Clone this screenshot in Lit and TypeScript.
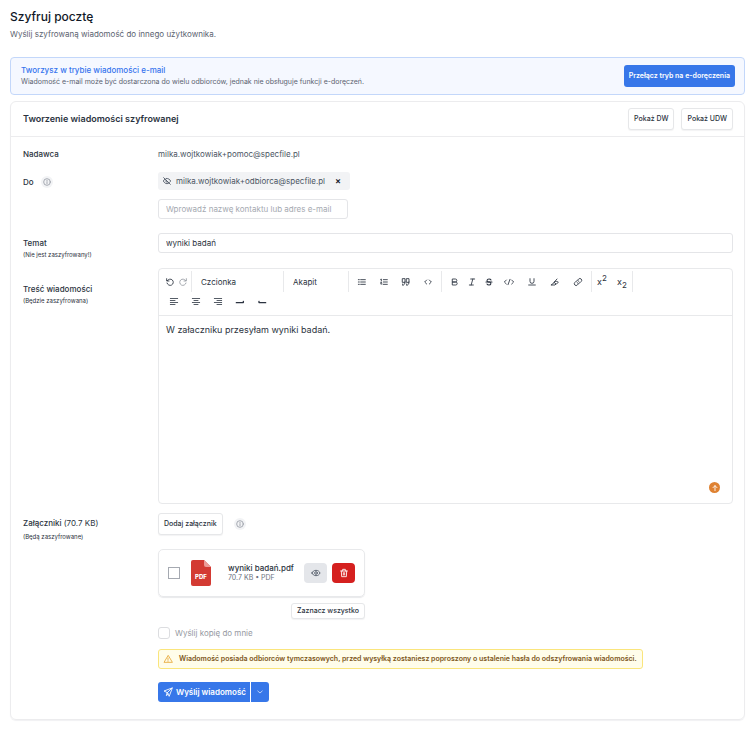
import { LitElement, html, css, svg, type TemplateResult } from "lit";
import { customElement, property } from "lit/decorators.js";

const glyphs: Record<string, TemplateResult> = {
  undo: svg`<path d="M4 8A9.500 9.500 0 1 1 3 15"/><path d="M2 2v7h7"/>`,
  redo: svg`<path d="M20 8A9.500 9.500 0 1 0 21 15"/><path d="M22 2v7h-7"/>`,
  bullets: svg`<path d="M8 5h14M8 12h14M8 19h14"/><path d="M1 5h3M1 12h3M1 19h3"/>`,
  numbers: svg`<path d="M10 5h12M10 12h12M10 19h12"/><path d="M2 4l2-1v6M2 13h3l-3 5h4"/>`,
  quote: svg`<path d="M2 2h7v11H2zM9 12c0 6-2 9-7 10V18M14 2h7v11h-7zM21 12c0 6-2 9-7 10V18"/>`,
  code: svg`<path d="M8 6l-6 6 6 6M16 6l6 6-6 6"/>`,
  bold: svg`<path d="M5 3h8a4.500 4.500 0 0 1 0 9H5zM5 12h9a4.500 4.500 0 0 1 0 9H5z"/>`,
  italic: svg`<path d="M8 3h12M4 21h12M14.500 3l-5 18"/>`,
  strike: svg`<path stroke-width="3.2" d="M18 6c-1-2-3-3-6-3-7 0-8 7-2 9h4c6 2 4 9-2 9-3 0-5-1-6-3"/><path stroke-width="3.2" d="M3 12h18"/>`,
  codeTag: svg`<path d="M4 6l-6 6 6 6M20 6l6 6-6 6M15 4L9 20"/>`,
  underline: svg`<path d="M6 2v8a6 6 0 0 0 12 0V2M2 21h20"/>`,
  marker: svg`<path d="M1 21h11l3-3-6-5-3 4zM9 13l9-10M15 18c3-1 6-3 7-6-3-2-8-3-12 0"/>`,
  link: svg`<path d="M9 14a5.500 5.500 0 0 0 8.500.5l4-4a5 5 0 0 0-7.500-7.500L12 5"/><path d="M15 10a5.500 5.500 0 0 0-8.500-.5l-4 4a5 5 0 0 0 7.500 7.500L12 19"/>`,
  left: svg`<path stroke-width="2.4" d="M1 1.500h22M1 7.500h14M1 13.500h22M1 19.500h14"/>`,
  center: svg`<path stroke-width="2.4" d="M1 1.500h22M6 7.500h12M1 13.500h22M6 19.500h12"/>`,
  right: svg`<path stroke-width="2.4" d="M1 1.500h22M9 7.500h14M1 13.500h22M9 19.500h14"/>`,
  outdent: svg`<path stroke-width="4" d="M1 14h19q3 0 2-4"/>`,
  indent: svg`<path stroke-width="4" d="M23 14H5q-3 0-2-4"/>`,
  info: svg`<circle cx="12" cy="12" r="10"/><path d="M12 11v6M12 7v1"/>`,
  hidden: svg`<path d="M2 2l20 20M6 6C4 7.500 2 10 1 12c2 4 6 8 11 8 2 0 4-.6 6-2M10 4.200C16 3.500 21 8 23 12c-.7 1.400-1.700 2.800-3 4M9.500 9.500a3.500 3.500 0 0 0 5 5"/>`,
  eye: svg`<path d="M0 12c2-5 6-8 12-8s10 3 12 8c-2 5-6 8-12 8s-10-3-12-8z"/><circle cx="12" cy="12" r="4"/>`,
  trash: svg`<path d="M2 6h20M8 6V1h8v5M4 6l1 17h14l1-17M10 11v7M14 11v7"/>`,
  warning: svg`<path d="M12 2L0 22h24zM12 9v6M12 18v1"/>`,
  send: svg`<path d="M24 0L0 9l10 5 5 10zM24 0L10 14M9 15l-2 8 6-5"/>`,
  chevron: svg`<path d="M3 8l9 8 9-8"/>`,
  up: svg`<path d="M12 20V5M6 11l6-6 6 6"/>`,
};

@customElement("ui-icon")
export class UiIcon extends LitElement {
  @property() name = "";

  static styles = css`
    :host { display: inline-flex; width: 8px; height: 8px; flex: none; }
    svg {
      width: 100%; height: 100%; fill: none; stroke: currentColor;
      stroke-width: 2.6; stroke-linecap: round; stroke-linejoin: round; overflow: visible;
    }
  `;

  render() {
    return html`<svg viewBox="0 0 24 24" aria-hidden="true">${glyphs[this.name]}</svg>`;
  }
}

@customElement("app-root")
export class AppRoot extends LitElement {
  static styles = css`
    :host {
      display: block;
      padding: 9px 11px 13px 10px;
      font: 400 8px/12px Inter, sans-serif;
      color: #2b3340;
      background: #fff;
    }
    * { box-sizing: border-box; }
    h1, h2, p { margin: 0; font-weight: 500; }
    button, input, select, textarea {
      font: inherit; color: inherit; margin: 0; outline: none;
    }
    button { display: inline-flex; align-items: center; justify-content: center; padding: 0; border: 0; background: none; }
    h1 { font-size: 12px; line-height: 16px; color: #111827; }
    .lead { margin-top: 3px; font-weight: 400; color: #5b6370; }

    .banner {
      display: flex; align-items: center; justify-content: space-between;
      margin-top: 17px; height: 38px; padding: 0 9px 0 10px;
      border: 1px solid #c3d7fa; border-radius: 4px; background: #f5f8ff;
    }
    .banner h2 { font-size: 8px; line-height: 11px; color: #3574ee; }
    .banner p { font-size: 7px; line-height: 11px; font-weight: 400; color: #5b6370; }
    .primary { background: #3777e9; color: #fff; font-weight: 600; }
    .switch { height: 22px; padding: 0 5px; font-size: 7px; border-radius: 3px; }

    .card { margin-top: 6px; border: 1px solid #ececee; border-radius: 6px; box-shadow: 0 1px 1px #f1f1f3; }
    .head {
      display: flex; align-items: center; gap: 7px; height: 35px;
      padding: 0 11px 0 12px; border-bottom: 1px solid #ececee;
    }
    .head h2 { flex: 1; font-size: 9px; font-weight: 600; }
    .outlined {
      height: 22px; padding: 0 5px; border: 1px solid #e6e7e9; border-radius: 3px;
      background: #fff; font-size: 7px; font-weight: 500; box-shadow: 0 1px 1px #f3f3f4;
    }

    form { padding: 11px 11px 17px 12px; }
    .row { display: grid; grid-template-columns: 135px minmax(0, 1fr); }
    .recipients { margin-top: 12px; }
    .subject { margin-top: 14px; }
    .body { margin-top: 7px; }
    .attachments { margin-top: 9px; }
    .name { font-weight: 500; }
    .note { display: block; font-size: 6px; line-height: 12px; font-weight: 400; }
    .attachments .note { margin-top: 2px; }
    .size { font-weight: 400; }
    .address { color: #4b5563; }
    .labelcell { padding-top: 4px; }
    .deep { padding-top: 15px; }
    .inline { display: flex; align-items: center; gap: 7px; }
    .help {
      display: inline-flex; align-items: center; justify-content: center;
      width: 12px; height: 12px; border-radius: 50%; background: #f2f3f5; color: #9a9fa8;
    }
    .chip {
      display: inline-flex; align-items: center; height: 18px; padding: 0 9px 0 5px;
      border-radius: 3px; background: #f2f3f5; color: #4b5563;
    }
    .chip span { margin-left: 5px; }
    .chip button { margin-left: 10px; font-size: 9px; font-weight: 600; color: #111827; }
    .field {
      display: block; width: 100%; height: 20px; padding: 0 7px;
      border: 1px solid #e4e5e8; border-radius: 3px; background: #fff;
    }
    .field::placeholder { color: #a5a9b1; opacity: 1; }
    .recipient { width: 190px; margin-top: 9px; }

    .editor { position: relative; border: 1px solid #e8e9eb; border-radius: 4px; }
    .toolbar { padding: 2px 0 3px; border-bottom: 1px solid #e8e9eb; }
    .tools { display: flex; height: 21px; }
    .group { display: flex; align-items: center; border-right: 1px solid #e8e9eb; }
    .group.last { border: 0; height: 20px; padding-left: 4px; }
    .history { width: 33px; padding-left: 7px; gap: 5px; }
    .history button:last-child { color: #989ca3; }
    .tool { width: 22px; height: 16px; }
    .slim { width: 17px; }
    .blocks { padding: 0 2px; }
    .marks { padding: 0 2px 0 4px; }
    .marks .tool:not(.slim) { width: 23px; }
    .scripts { font-size: 9px; }
    .scripts .tool { width: 20px; }
    .scripts sup, .scripts sub { font-size: 8px; line-height: 0; }
    .pick {
      appearance: none; border: 0; border-right: 1px solid #e8e9eb; background: none;
      height: 21px; padding: 0 9px; width: 92px; border-radius: 0;
    }
    .para { width: 65px; }
    .message {
      display: block; width: 100%; height: 187px; resize: none; border: 0;
      background: none; padding: 7px; font-size: 9px; line-height: 14px;
    }
    .badge {
      position: absolute; right: 12px; bottom: 10px; width: 11px; height: 11px;
      border-radius: 50%; background: #df8232; color: #fff;
    }

    .attach { display: flex; align-items: center; gap: 11px; }
    .files { width: 207px; margin-top: 14px; display: flex; flex-direction: column; align-items: flex-end; gap: 6px; }
    .file {
      display: flex; align-items: center; width: 100%; height: 48px; padding: 0 9px;
      border: 1px solid #e8e9eb; border-radius: 5px; box-shadow: 0 1px 1px #e8e9eb;
    }
    input[type="checkbox"] {
      appearance: none; flex: none; width: 12px; height: 12px; border: 1px solid #a5a9b1; background: #fff;
    }
    .pdf { width: 20px; height: 26px; margin-left: 11px; flex: none; }
    .pdf text { font: 800 6px Inter, sans-serif; fill: #fff; }
    .meta { flex: 1; margin-left: 17px; line-height: 10px; white-space: nowrap; }
    .meta strong { display: block; font-size: 8px; font-weight: 500; }
    .meta small { display: block; font-size: 7px; color: #6b7280; }
    .act { width: 23px; height: 20px; border-radius: 4px; background: #e4e6ea; color: #4b5563; }
    .act.danger { margin-left: 5px; background: #d5201f; color: #fff; }
    .all { height: 16px; }
    .copy { display: flex; align-items: center; gap: 5px; margin-top: 8px; color: #9599a1; }
    .copy input[type="checkbox"] { border-color: #dcdde0; border-radius: 3px; }
    .alert {
      display: flex; align-items: center; gap: 7px; width: fit-content; height: 20px; margin-top: 10px;
      padding: 0 5px; border: 1px solid #fae57c; border-radius: 3px; background: #fffdea;
      color: #7d5620; font-size: 7px; font-weight: 600;
    }
    .alert ui-icon { color: #e8a93a; }
    .send { display: flex; gap: 1px; margin-top: 13px; }
    .send .primary { height: 20px; }
    .main { gap: 4px; padding: 0 4px 0 6px; border-radius: 3px 0 0 3px; }
    .more { width: 18px; border-radius: 0 3px 3px 0; }
    .more ui-icon { width: 6px; height: 6px; }
  `;

  private tool(icon: string, label: string, slim = false) {
    return html`<button type="button" class="tool ${slim ? "slim" : ""}" aria-label=${label}><ui-icon name=${icon}></ui-icon></button>`;
  }

  render() {
    return html`
      <h1>Szyfruj pocztę</h1>
      <p class="lead">Wyślij szyfrowaną wiadomość do innego użytkownika.</p>

      <section class="banner">
        <div>
          <h2>Tworzysz w trybie wiadomości e-mail</h2>
          <p>Wiadomość e-mail może być dostarczona do wielu odbiorców, jednak nie obsługuje funkcji e-doręczeń.</p>
        </div>
        <button class="primary switch">Przełącz tryb na e-doręczenia</button>
      </section>

      <section class="card">
        <div class="head">
          <h2>Tworzenie wiadomości szyfrowanej</h2>
          <button class="outlined">Pokaż DW</button>
          <button class="outlined">Pokaż UDW</button>
        </div>
        <form>
          <div class="row">
            <span class="name">Nadawca</span>
            <span class="address">milka.wojtkowiak+pomoc@specfile.pl</span>
          </div>

          <div class="row recipients">
            <div class="labelcell">
              <div class="inline">
                <label class="name" for="to">Do</label>
                <span class="help"><ui-icon name="info"></ui-icon></span>
              </div>
            </div>
            <div>
              <div class="chip">
                <ui-icon name="hidden"></ui-icon>
                <span>milka.wojtkowiak+odbiorca@specfile.pl</span>
                <button type="button" aria-label="Usuń">×</button>
              </div>
              <input class="field recipient" id="to" placeholder="Wprowadź nazwę kontaktu lub adres e-mail" />
            </div>
          </div>

          <div class="row subject">
            <label class="labelcell name" for="subject">Temat<span class="note">(Nie jest zaszyfrowany!)</span></label>
            <div><input class="field" id="subject" .value=${"wyniki badań"} /></div>
          </div>

          <div class="row body">
            <label class="deep name" for="message">Treść wiadomości<span class="note">(Będzie zaszyfrowana)</span></label>
            <div class="editor">
              <div class="toolbar">
                <div class="tools">
                  <div class="group history">
                    <button type="button" aria-label="Cofnij"><ui-icon name="undo"></ui-icon></button>
                    <button type="button" aria-label="Ponów"><ui-icon name="redo"></ui-icon></button>
                  </div>
                  <select class="pick" aria-label="Czcionka"><option>Czcionka</option></select>
                  <select class="pick para" aria-label="Akapit"><option>Akapit</option></select>
                  <div class="group blocks">
                    ${this.tool("bullets", "Lista")} ${this.tool("numbers", "Lista numerowana")}
                    ${this.tool("quote", "Cytat")} ${this.tool("code", "Blok kodu")}
                  </div>
                  <div class="group marks">
                    ${this.tool("bold", "Pogrubienie", true)} ${this.tool("italic", "Kursywa", true)}
                    ${this.tool("strike", "Przekreślenie", true)} ${this.tool("codeTag", "Kod")}
                    ${this.tool("underline", "Podkreślenie")} ${this.tool("marker", "Wyróżnienie")}
                    ${this.tool("link", "Odnośnik")}
                  </div>
                  <div class="group scripts">
                    <button type="button" class="tool"><span>x<sup>2</sup></span></button>
                    <button type="button" class="tool"><span>x<sub>2</sub></span></button>
                  </div>
                </div>
                <div class="group last">
                  ${this.tool("left", "Do lewej")} ${this.tool("center", "Do środka")}
                  ${this.tool("right", "Do prawej")} ${this.tool("outdent", "Zmniejsz wcięcie")}
                  ${this.tool("indent", "Zwiększ wcięcie")}
                </div>
              </div>
              <textarea class="message" id="message" .value=${"W załaczniku przesyłam wyniki badań."}></textarea>
              <button type="button" class="badge" aria-label="Do góry"><ui-icon name="up"></ui-icon></button>
            </div>
          </div>

          <div class="row attachments">
            <div class="labelcell name">Załączniki <span class="size">(70.7 KB)</span><span class="note">(Będą zaszyfrowane)</span></div>
            <div>
              <div class="attach">
                <button type="button" class="outlined">Dodaj załącznik</button>
                <span class="help"><ui-icon name="info"></ui-icon></span>
              </div>
              <div class="files">
                <div class="file">
                  <input type="checkbox" aria-label="wyniki badań.pdf" />
                  <svg class="pdf" viewBox="0 0 20 26" aria-hidden="true">
                    <path fill="#d33a33" d="M2 0h11l7 7v17a2 2 0 0 1-2 2H2a2 2 0 0 1-2-2V2a2 2 0 0 1 2-2z" />
                    <path fill="#eb9c98" d="M13 0l7 7h-5a2 2 0 0 1-2-2z" />
                    <text x="10" y="19" text-anchor="middle">PDF</text>
                  </svg>
                  <div class="meta"><strong>wyniki badań.pdf</strong><small>70.7 KB • PDF</small></div>
                  <button type="button" class="act" aria-label="Podgląd"><ui-icon name="eye"></ui-icon></button>
                  <button type="button" class="act danger" aria-label="Usuń plik"><ui-icon name="trash"></ui-icon></button>
                </div>
                <button type="button" class="outlined all">Zaznacz wszystko</button>
              </div>
              <label class="copy"><input type="checkbox" />Wyślij kopię do mnie</label>
              <div class="alert" role="alert">
                <ui-icon name="warning"></ui-icon>
                <span>Wiadomość posiada odbiorców tymczasowych, przed wysyłką zostaniesz poproszony o ustalenie hasła do odszyfrowania wiadomości.</span>
              </div>
              <div class="send">
                <button type="button" class="primary main"><ui-icon name="send"></ui-icon>Wyślij wiadomość</button>
                <button type="button" class="primary more" aria-label="Więcej opcji"><ui-icon name="chevron"></ui-icon></button>
              </div>
            </div>
          </div>
        </form>
      </section>
    `;
  }
}
